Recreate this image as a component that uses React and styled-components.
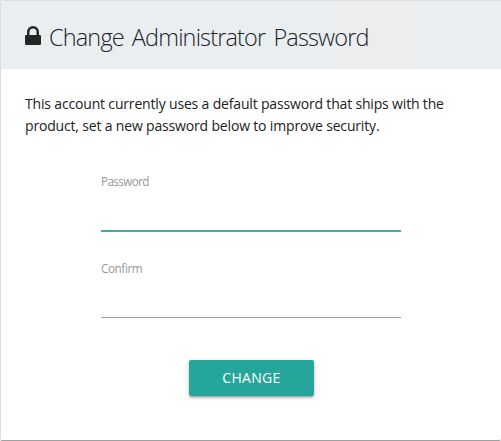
import React from "react";
import styled, { createGlobalStyle } from "styled-components";

const GlobalStyle = createGlobalStyle`
  *, *::before, *::after { box-sizing: border-box; }
  body {
    margin: 0;
    background: #fff;
    overflow: hidden;
    font-family: "Segoe UI", "Open Sans", "Noto Sans", sans-serif;
  }
`;

const Card = styled.main`
  width: 501px;
  height: 441px;
  display: flex;
  flex-direction: column;
  background: #fff;
  border: solid #dcdddf;
  border-width: 1px 0 1px 1px;
  border-bottom-color: #a0a0a0;
  border-radius: 2px 0 2px 2px;
`;

const Header = styled.header`
  flex: none;
  height: 68px;
  display: flex;
  align-items: center;
  padding: 3px 0 0 24px;
  background: linear-gradient(90deg, #eaeef1 339px, #ededed 339px 412px, #eaeef1 412px);
`;

const LockIcon = styled.svg`
  flex: none;
  width: 16px;
  height: 19px;
  margin: 0 8px 2px 0;
  fill: #222625;
`;

const Title = styled.h1`
  margin: 0;
  font-size: 23.5px;
  line-height: 32px;
  font-weight: 300;
  letter-spacing: -0.85px;
  word-spacing: 2.8px;
  white-space: nowrap;
  color: #212529;
`;

const Message = styled.p`
  margin: 24px 0 0 24px;
  font-size: 14px;
  line-height: 22px;
  letter-spacing: -0.17px;
  white-space: nowrap;
  color: #212121;
`;

const Line = styled.span`
  display: block;
`;

const Form = styled.form`
  width: 300px;
  margin: 36px 0 0 100px;
  display: flex;
  flex-direction: column;
  align-items: center;
`;

const Field = styled.label`
  width: 100%;
  height: ${(p) => (p.$active ? "59px" : "58px")};
  margin-bottom: ${(p) => (p.$active ? "28px" : "42px")};
  display: flex;
  flex-direction: column;
  border-bottom: ${(p) => (p.$active ? "2px solid #40aea2" : "1px solid #9e9e9e")};
`;

const Caption = styled.span`
  font-size: 11.7px;
  line-height: 16px;
  letter-spacing: ${(p) => p.$spacing};
  color: #979797;
`;

const Input = styled.input`
  width: 100%;
  flex: 1;
  min-height: 0;
  padding: 0;
  border: 0;
  outline: 0;
  background: transparent;
`;

const Submit = styled.button`
  width: 125px;
  height: 36px;
  margin-left: 1px;
  padding: 0;
  border: 0;
  border-radius: 2px;
  background: #26a69a;
  color: #fff;
  font: 400 14px/36px "Segoe UI", "Open Sans", "Noto Sans", sans-serif;
  letter-spacing: 0.3px;
  box-shadow: 0 2px 2px rgba(0, 0, 0, 0.14), 0 3px 1px -2px rgba(0, 0, 0, 0.12),
    0 1px 5px rgba(0, 0, 0, 0.2);
`;

export default function App() {
  return (
    <>
      <GlobalStyle />
      <Card>
        <Header>
          <LockIcon viewBox="0 0 16 19" aria-hidden="true">
            <path
              fillRule="evenodd"
              d="M2 9V6a6 6 0 0 1 12 0v3h.8A1.200 1.200 0 0 1 16 10.200v7.600A1.200 1.200 0 0 1 14.800 19H1.200A1.200 1.200 0 0 1 0 17.800v-7.600A1.200 1.200 0 0 1 1.200 9zM4.500 9h7V6a3.500 3.500 0 0 0-7 0z"
            />
          </LockIcon>
          <Title>Change Administrator Password</Title>
        </Header>
        <Message>
          <Line>This account currently uses a default password that ships with the</Line>
          <Line>product, set a new password below to improve security.</Line>
        </Message>
        <Form onSubmit={(e) => e.preventDefault()}>
          <Field $active>
            <Caption $spacing="-0.6px">Password</Caption>
            <Input type="password" />
          </Field>
          <Field>
            <Caption $spacing="-0.4px">Confirm</Caption>
            <Input type="password" />
          </Field>
          <Submit type="submit">CHANGE</Submit>
        </Form>
      </Card>
    </>
  );
}
